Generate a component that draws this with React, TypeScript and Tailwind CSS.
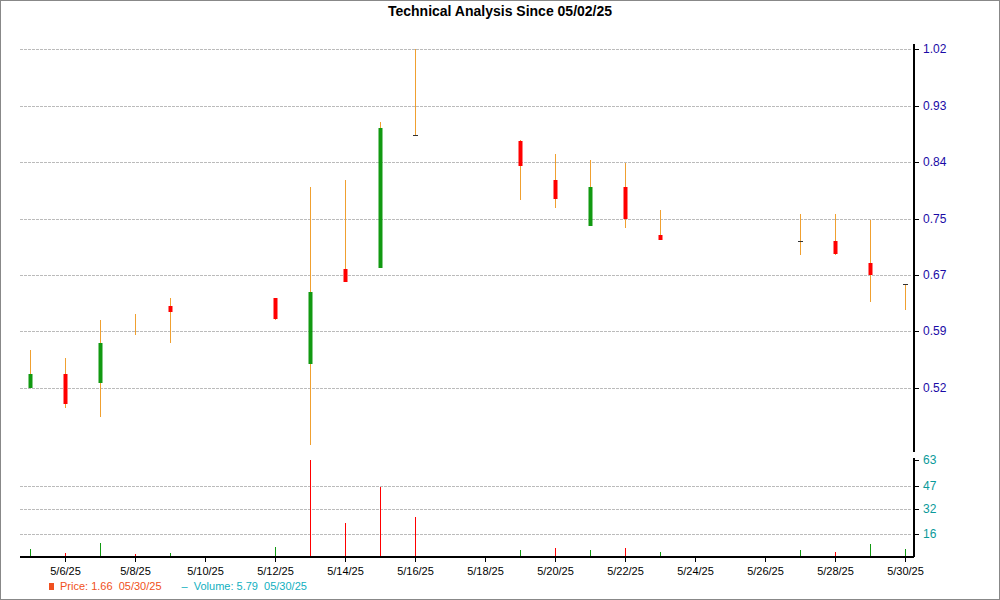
const C = [
  [30,350,388,374,388,'g'],[65,358,408,374,404,'r'],[100,320,417,343,383,'g'],[135,314,335,324,324,'n'],
  [170,298,343,306,312,'r'],[275,298,320,298,319,'r'],[310,187,445,292,364,'g'],[345,180,282,269,282,'r'],
  [380,122,268,128,268,'g'],[415,49,135,135,135,'t'],[520,140,200,141,166,'r'],[555,154,208,180,199,'r'],
  [590,160,226,187,226,'g'],[625,163,228,187,219,'r'],[660,210,240,235,240,'r'],[800,214,255,241,241,'t'],
  [835,214,255,241,254,'r'],[870,220,302,263,275,'r'],[905,284,310,284,284,'t'],
] as const;
const V: [number, number, string][] = [[30,549,'g'],[65,553,'r'],[100,543,'g'],[135,554,'r'],[170,553,'g'],[275,547,'g'],[310,460,'r'],[345,523,'r'],[380,487,'r'],[415,517,'r'],[520,550,'g'],[555,548,'r'],[590,550,'g'],[625,548,'r'],[660,552,'g'],[800,550,'g'],[835,552,'r'],[870,544,'g'],[905,549,'g']];
const PG: [number, string][] = [[49,'1.02'],[106,'0.93'],[162,'0.84'],[219,'0.75'],[275,'0.67'],[331,'0.59'],[388,'0.52']];
const VG: [number, string][] = [[460,'63'],[486,'47'],[509,'32'],[534,'16']];
const X = ['5/6/25','5/8/25','5/10/25','5/12/25','5/14/25','5/16/25','5/18/25','5/20/25','5/22/25','5/24/25','5/26/25','5/28/25','5/30/25'];
const col = (c: string) => (c === 'g' ? '#119911' : c === 'r' ? '#ff0000' : '#222');
export default function App() {
  return (
    <div className="w-[1000px] h-[600px] border border-[#888] bg-white flex flex-col" style={{ fontFamily: '"Liberation Sans", Arial, sans-serif' }}>
      <div className="h-[20px] text-center text-[14px] font-bold text-black leading-[20px]">Technical Analysis Since 05/02/25</div>
      <svg width="998" height="556" viewBox="1 21 998 556" className="block">
        {PG.map(([y]) => <line key={y} x1="20" x2="912" y1={y + 0.5} y2={y + 0.5} stroke="#bbb" strokeDasharray="3 1" />)}
        {VG.slice(1).map(([y]) => <line key={y} x1="20" x2="912" y1={y + 0.5} y2={y + 0.5} stroke="#bbb" strokeDasharray="3 1" />)}
        <line x1="914" x2="914" y1="44" y2="452" stroke="#000" strokeWidth="2" />
        <line x1="914" x2="914" y1="458" y2="557" stroke="#000" strokeWidth="2" />
        {PG.map(([y, t]) => (
          <g key={t}><line x1="914" x2="919" y1={y + 0.5} y2={y + 0.5} stroke="#000" />
            <text x="923" y={y + 4} fontSize="12" fill="#1a0aa6">{t}</text></g>
        ))}
        {VG.map(([y, t]) => (
          <g key={t}><line x1="914" x2="919" y1={y + 0.5} y2={y + 0.5} stroke="#000" />
            <text x="923" y={y + 4} fontSize="12" fill="#0a9a9a">{t}</text></g>
        ))}
        {C.map(([x, wt, wb, bt, bb, c]) => (
          <g key={x}>
            <line x1={x + 0.5} x2={x + 0.5} y1={wt} y2={wb} stroke="#f0a030" />
            {c === 'n' ? null : c === 't' ? <line x1={x - 2} x2={x + 3} y1={bt + 0.5} y2={bt + 0.5} stroke="#333" />
              : <rect x={x - 1.5} y={bt} width="4" height={Math.max(bb - bt, 3)} fill={col(c)} />}
          </g>
        ))}
        {V.map(([x, y, c]) => <line key={x} x1={x + 0.5} x2={x + 0.5} y1={y} y2="557" stroke={c === 'g' ? '#119911' : '#ff0000'} />)}
        <line x1="20" x2="914" y1="557" y2="557" stroke="#000" strokeWidth="2" />
        {X.map((t, i) => {
          const x = 65 + i * 70;
          return <g key={t}><line x1={x + 0.5} x2={x + 0.5} y1="557" y2="562" stroke="#000" />
            <text x={x + 0.5} y="575" fontSize="11" textAnchor="middle" fill="#000">{t}</text></g>;
        })}
      </svg>
      <div className="flex items-center text-[11px] pl-[48px] h-[18px] gap-[6px]">
        <span className="w-[5px] h-[7px] bg-[#f05020] inline-block" />
        <span className="text-[#f05020]">Price: 1.66&nbsp; 05/30/25</span>
        <span className="text-[#10b0c0] ml-[14px]">–&nbsp; Volume: 5.79&nbsp; 05/30/25</span>
      </div>
    </div>
  );
}
